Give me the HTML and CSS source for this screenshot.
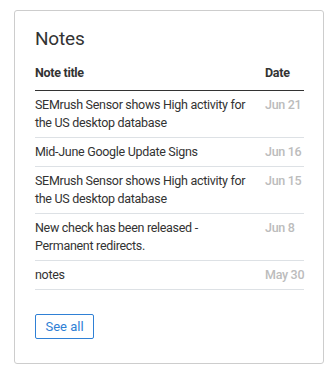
FILE: index.html
```html
<!DOCTYPE html>
<html>
<head>
<meta charset="utf-8">
<link rel="stylesheet" href="styles.css">
</head>
<body>
<div class="card">
  <h2 class="title">Notes</h2>
  <div class="table">
    <div class="row head">
      <div class="c-title">Note title</div>
      <div class="c-date">Date</div>
    </div>
    <div class="row">
      <div class="c-title">SEMrush Sensor shows High activity for the US desktop database</div>
      <div class="c-date">Jun 21</div>
    </div>
    <div class="row">
      <div class="c-title">Mid-June Google Update Signs</div>
      <div class="c-date">Jun 16</div>
    </div>
    <div class="row">
      <div class="c-title">SEMrush Sensor shows High activity for the US desktop database</div>
      <div class="c-date">Jun 15</div>
    </div>
    <div class="row">
      <div class="c-title">New check has been released - Permanent redirects.</div>
      <div class="c-date">Jun 8</div>
    </div>
    <div class="row">
      <div class="c-title">notes</div>
      <div class="c-date">May 30</div>
    </div>
  </div>
  <button class="btn">See all</button>
</div>
</body>
</html>
```
FILE: styles.css
```css
html, body {
  margin: 0;
  background: #fff;
}
body {
  padding: 10px 12px 13px 14px;
  font-family: "Roboto", "Open Sans", sans-serif;
  color: #333;
}
.card {
  border: 1px solid #cdcdcd;
  border-radius: 3px;
  padding: 16px 19px 24px 20px;
  box-sizing: content-box;
  width: 269px;
}
.title {
  margin: 0;
  font-size: 19px;
  letter-spacing: -0.2px;
  line-height: 24px;
  font-weight: 400;
  color: #333;
}
.table {
  margin-top: 13px;
}
.row {
  display: grid;
  grid-template-columns: 1fr 39px;
  font-size: 12.5px;
  letter-spacing: -0.3px;
  line-height: 18px;
  padding: 5px 0;
  border-bottom: 1px solid #dde1e5;
}
.row.head {
  font-weight: 700;
  padding: 0 0 8px;
  border-bottom: 1px solid #333;
}
.c-title {
  padding-right: 8px;
}
.c-date {
  color: #bcbcbc;
  font-weight: 500;
  white-space: nowrap;
}
.head .c-date {
  color: #333;
  font-weight: 700;
}
.btn {
  margin-top: 24px;
  height: 25px;
  width: 59px;
  padding: 0;
  border: 1px solid #2f80d5;
  border-radius: 2px;
  background: #fff;
  color: #2f80d5;
  font-family: inherit;
  font-size: 13px;
  display: block;
}
```
